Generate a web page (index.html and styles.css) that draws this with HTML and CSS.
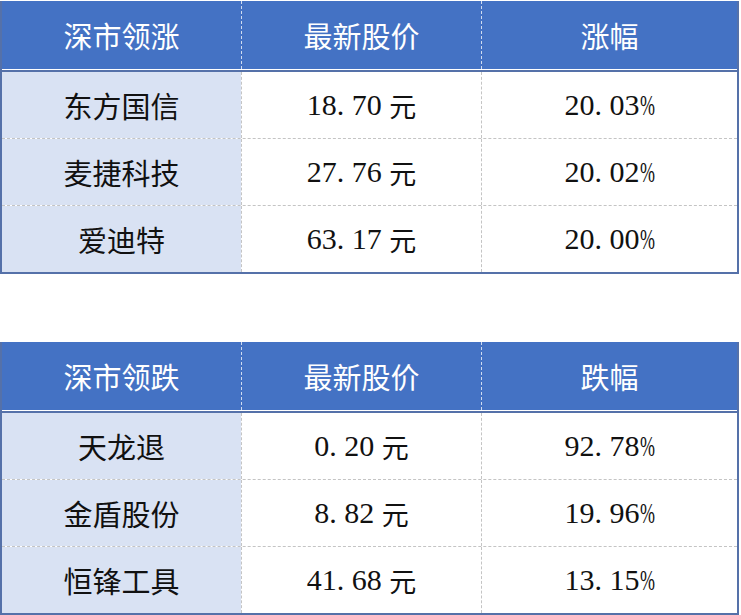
FILE: index.html
```html
<!DOCTYPE html>
<html lang="zh-CN">
<head>
<meta charset="utf-8">
<link rel="stylesheet" href="styles.css">
</head>
<body>
<div class="page">
  <div class="tbl">
    <div class="head">
      <div class="cell">深市领涨</div>
      <div class="cell">最新股价</div>
      <div class="cell">涨幅</div>
    </div>
    <div class="body">
      <div class="row">
        <div class="cell name">东方国信</div>
        <div class="cell">18. 70 <span class="unit">元</span></div>
        <div class="cell">20. 03<span class="pct">%</span></div>
      </div>
      <div class="row">
        <div class="cell name">麦捷科技</div>
        <div class="cell">27. 76 <span class="unit">元</span></div>
        <div class="cell">20. 02<span class="pct">%</span></div>
      </div>
      <div class="row">
        <div class="cell name">爱迪特</div>
        <div class="cell">63. 17 <span class="unit">元</span></div>
        <div class="cell">20. 00<span class="pct">%</span></div>
      </div>
    </div>
  </div>

  <div class="tbl">
    <div class="head">
      <div class="cell">深市领跌</div>
      <div class="cell">最新股价</div>
      <div class="cell">跌幅</div>
    </div>
    <div class="body">
      <div class="row">
        <div class="cell name">天龙退</div>
        <div class="cell">0. 20 <span class="unit">元</span></div>
        <div class="cell">92. 78<span class="pct">%</span></div>
      </div>
      <div class="row">
        <div class="cell name">金盾股份</div>
        <div class="cell">8. 82 <span class="unit">元</span></div>
        <div class="cell">19. 96<span class="pct">%</span></div>
      </div>
      <div class="row">
        <div class="cell name">恒锋工具</div>
        <div class="cell">41. 68 <span class="unit">元</span></div>
        <div class="cell">13. 15<span class="pct">%</span></div>
      </div>
    </div>
  </div>
</div>
</body>
</html>
```

FILE: styles.css
```css
html, body {
  margin: 0;
  padding: 0;
  background: #ffffff;
}

.page {
  padding-top: 1px;
  display: flex;
  flex-direction: column;
  gap: 68px;
  font-family: "Liberation Serif", "Noto Sans CJK SC", serif;
}

.tbl {
  width: 739px;
  box-sizing: border-box;
  border-left: 2px solid #5571a9;
  border-right: 2px solid #5571a9;
  border-bottom: 2px solid #5571a9;
  background: #ffffff;
}

.head {
  display: grid;
  grid-template-columns: 239px 240px 1fr;
  height: 68px;
  background: #4472c4;
  border-bottom: 1px solid #ffffff;
}

.head .cell {
  color: #ffffff;
  font-family: "Noto Sans CJK SC", sans-serif;
  font-size: 29px;
  font-weight: 400;
}

.head .cell + .cell {
  border-left: 1px dashed rgba(255, 255, 255, 0.75);
}

.body {
  border-top: 2px solid #5571a9;
}

.row {
  display: grid;
  grid-template-columns: 239px 240px 1fr;
  height: 66px;
}

.row + .row {
  border-top: 1px dashed #c4c4c4;
}

.row .cell + .cell {
  border-left: 1px dashed #c4c4c4;
}

.cell {
  display: flex;
  align-items: center;
  justify-content: center;
  font-size: 30px;
  color: #111111;
  white-space: pre;
}

.cell.name {
  background: #d9e2f3;
  font-family: "Noto Sans CJK SC", sans-serif;
  font-size: 29px;
}

.unit {
  font-family: "Noto Sans CJK SC", sans-serif;
  font-size: 27px;
  vertical-align: 1px;
}

.pct {
  display: inline-block;
  width: 15px;
  transform: scaleX(0.6);
  transform-origin: left center;
}
```
